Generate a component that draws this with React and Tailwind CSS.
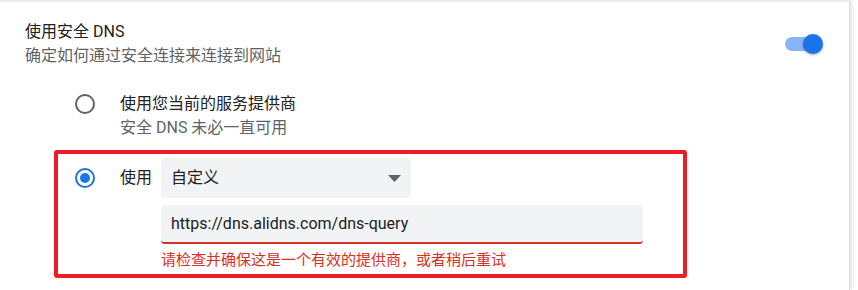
export default function App() {
  const font = { fontFamily: 'Roboto, "Noto Sans CJK SC", "Noto Sans", sans-serif' };
  return (
    <div className="w-[858px] h-[290px] bg-white overflow-hidden" style={font}>
      <div className="w-[850px] h-[290px] bg-white border-t-2 border-[#ededed] border-r border-r-[#dcdcdc] shadow-[2px_0_4px_rgba(0,0,0,0.12)]">
        {/* Top row */}
        <div className="flex items-center justify-between pl-[25px] pr-[26px] pt-[18px]">
          <div className="text-[16px] leading-[24px]">
            <div className="text-[#202124]">使用安全 DNS</div>
            <div className="text-[#5f6368]">确定如何通过安全连接来连接到网站</div>
          </div>
          <div className="relative w-[38px] h-[20px]">
            <div className="absolute left-0 top-[3px] w-[32px] h-[14px] rounded-full bg-[#8ab4f8]" />
            <div className="absolute right-0 top-0 w-[20px] h-[20px] rounded-full bg-[#1a73e8] shadow-[0_1px_3px_rgba(0,0,0,0.35)]" />
          </div>
        </div>

        {/* Radio 1 */}
        <div className="flex items-start pl-[75px] mt-[24px]">
          <div className="mt-[2px] w-[20px] h-[20px] rounded-full border-2 border-[#5f6368] shrink-0" />
          <div className="ml-[25px] text-[16px] leading-[24px]">
            <div className="text-[#202124]">使用您当前的服务提供商</div>
            <div className="text-[#5f6368]">安全 DNS 未必一直可用</div>
          </div>
        </div>

        {/* Red highlighted box */}
        <div className="ml-[54px] mt-[10px] w-[633px] h-[128px] border-4 border-[#ee1c25] rounded-[3px] pt-[4px] pl-[17px]">
          <div className="flex items-center">
            <div className="w-[20px] h-[20px] rounded-full border-2 border-[#1a73e8] flex items-center justify-center shrink-0">
              <div className="w-[10px] h-[10px] rounded-full bg-[#1a73e8]" />
            </div>
            <div className="ml-[25px] w-[41px] text-[16px] text-[#202124] leading-[24px]">使用</div>
            <div className="w-[250px] h-[40px] rounded-[4px] bg-[#f1f3f4] flex items-center justify-between pl-[10px] pr-[10px]">
              <span className="text-[16px] text-[#202124]">自定义</span>
              <svg width="13" height="7" viewBox="0 0 13 7">
                <path d="M0 0 L13 0 L6.5 7 Z" fill="#5f6368" />
              </svg>
            </div>
          </div>
          <div className="ml-[86px] mt-[7px] w-[482px] h-[39px] rounded-[4px] bg-[#f1f3f4] border-b-2 border-[#d93025] flex items-center pl-[10px]">
            <span className="text-[16px] text-[#202124]">https://dns.alidns.com/dns-query</span>
          </div>
          <div className="ml-[86px] mt-[6px] text-[15px] leading-[20px] text-[#d93025]">
            请检查并确保这是一个有效的提供商，或者稍后重试
          </div>
        </div>
      </div>
    </div>
  );
}
